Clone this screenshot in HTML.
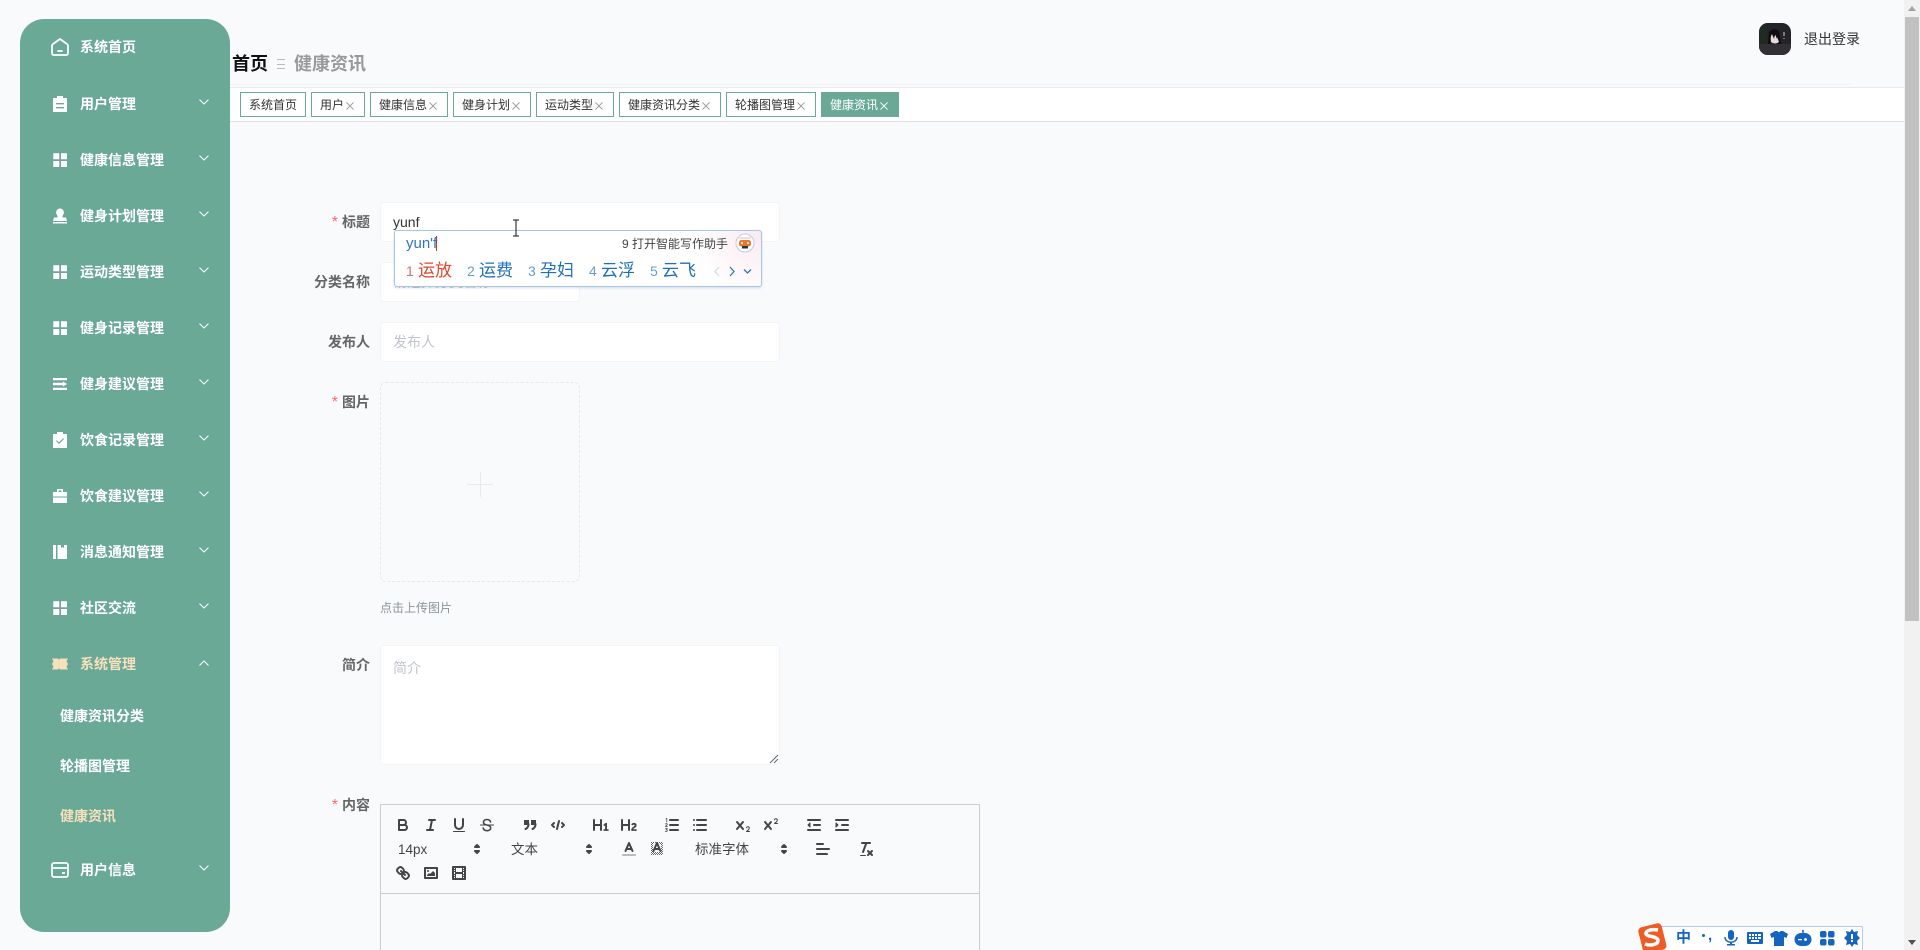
<!DOCTYPE html>
<html lang="zh-CN"><head><meta charset="utf-8"><title>健康资讯</title>
<style>
*{box-sizing:border-box}
html,body{margin:0;padding:0;width:1920px;height:950px;overflow:hidden;background:#f9fafc;font-family:"Liberation Sans","Noto Sans CJK SC",sans-serif}
#root{position:absolute;left:0;top:0;width:1920px;height:950px;overflow:hidden}
.a{position:absolute;white-space:nowrap}
#side{position:absolute;left:20px;top:19px;width:210px;height:913px;background:#6aa996;border-radius:24px}
.m{position:absolute;left:80px;line-height:20px;font-size:14px;font-weight:700;color:#fff;white-space:nowrap}
.s{left:60px}
.on{color:#f7e0bd}
.ic{position:absolute;left:50px;width:20px;height:20px;fill:#fff}
.ch{position:absolute;left:199px;width:10px;height:6px;fill:none;stroke:#fff;stroke-width:1}
.t{position:absolute;top:92px;height:25px;background:#fff;border:1px solid #6aa996;font-size:12px;line-height:24px;padding-left:8px;color:#333;white-space:nowrap}
.t svg{display:inline-block;width:8px;height:8px;margin-left:2px;vertical-align:-.5px;fill:none;stroke:#999;stroke-width:1.100}
.l{position:absolute;width:140px;left:230px;text-align:right;font-size:14px;font-weight:700;color:#666;line-height:20px}
.l b{color:#f56c6c;font-weight:400;margin-right:4px;font-size:16px;line-height:10px}
.in{position:absolute;left:380px;background:#fff;border:1px solid #f3f4f6;border-radius:4px;font-size:14px;color:#c0c4cc;padding-left:12px}
.q{position:absolute;width:18px;height:18px;fill:none;stroke:#444;stroke-width:2;stroke-linecap:round;stroke-linejoin:round}
.q .f{fill:#444;stroke:none}
.q .n{stroke-width:1}
.pk{position:absolute;top:841px;font-size:13.500px;line-height:18px;color:#444}
.ar{position:absolute;top:840px;width:18px;height:18px;fill:#444;stroke:#444;stroke-width:2;stroke-linejoin:round}
.n1{position:absolute;top:261px;font-size:14px;line-height:20px;color:#6b9bd0}
.c1{position:absolute;top:259px;font-size:17px;line-height:24px;color:#1f6fb8}
.sg{position:absolute;top:929px;width:18px;height:18px;fill:#1565c0}
</style></head><body>
<div id="root">

<!-- sidebar -->
<div id="side"></div>
<svg class="ic" style="top:37px;fill:none;stroke:#fff;stroke-width:1.800;stroke-linejoin:round" viewBox="0 0 20 20"><path d="M2 9q0-1.200 1-2L10 2l7 5q1 .8 1 2v7q0 2-2 2H4q-2 0-2-2z"/><path d="M8 14h4" stroke-linecap="round"/></svg>
<div class="m" style="top:37px">系统首页</div>

<svg class="ic" style="top:94px" viewBox="0 0 20 20"><path fill-rule="evenodd" d="M7 2h6v2h4v14H3V4h4zM6 9v1.400h8V9zM6 13v1.400h8V13z"/></svg>
<div class="m" style="top:94px">用户管理</div>
<svg class="ch" style="top:99px" viewBox="0 0 10 6"><path d="M.5.5 5 5 9.500.5"/></svg>

<svg class="ic" style="top:150px" viewBox="0 0 20 20"><path d="M3.300 3.300h6v6h-6zM11 3.300h6v6h-6zM3.300 11h6v6h-6zM11 11h6v6h-6z"/></svg>
<div class="m" style="top:150px">健康信息管理</div>
<svg class="ch" style="top:155px" viewBox="0 0 10 6"><path d="M.5.5 5 5 9.500.5"/></svg>

<svg class="ic" style="top:206px" viewBox="0 0 20 20"><path d="M10 2.500a4 4 0 0 1 3 6.500c-.6.800-.8 1.500-.4 2.500h3.400l1 3.500H3l1-3.500h3.400c.4-1 .2-1.700-.4-2.500A4 4 0 0 1 10 2.500zM3 16h14v1.500H3z"/></svg>
<div class="m" style="top:206px">健身计划管理</div>
<svg class="ch" style="top:211px" viewBox="0 0 10 6"><path d="M.5.5 5 5 9.500.5"/></svg>

<svg class="ic" style="top:262px" viewBox="0 0 20 20"><path d="M3.300 3.300h6v6h-6zM11 3.300h6v6h-6zM3.300 11h6v6h-6zM11 11h6v6h-6z"/></svg>
<div class="m" style="top:262px">运动类型管理</div>
<svg class="ch" style="top:267px" viewBox="0 0 10 6"><path d="M.5.5 5 5 9.500.5"/></svg>

<svg class="ic" style="top:318px" viewBox="0 0 20 20"><path d="M3.300 3.300h6v6h-6zM11 3.300h6v6h-6zM3.300 11h6v6h-6zM11 11h6v6h-6z"/></svg>
<div class="m" style="top:318px">健身记录管理</div>
<svg class="ch" style="top:323px" viewBox="0 0 10 6"><path d="M.5.5 5 5 9.500.5"/></svg>

<svg class="ic" style="top:374px" viewBox="0 0 20 20"><path d="M3 4h14v2.200H3zM3 8.800h10V7.500L17 10l-4 2.500v-1.300H3zM3 13.800h14V16H3z"/></svg>
<div class="m" style="top:374px">健身建议管理</div>
<svg class="ch" style="top:379px" viewBox="0 0 10 6"><path d="M.5.5 5 5 9.500.5"/></svg>

<svg class="ic" style="top:430px" viewBox="0 0 20 20"><path fill-rule="evenodd" d="M7 2h6v2h4v14H3V4h4zM6 11l3 3 5-5-.8-.8L9 12.400 6.800 10.200z"/></svg>
<div class="m" style="top:430px">饮食记录管理</div>
<svg class="ch" style="top:435px" viewBox="0 0 10 6"><path d="M.5.5 5 5 9.500.5"/></svg>

<svg class="ic" style="top:486px" viewBox="0 0 20 20"><path fill-rule="evenodd" d="M7 3h6v3h4v4.500H3V6h4zM8.500 4.500V6h3V4.500zM3 11.500h14V17H3z"/></svg>
<div class="m" style="top:486px">饮食建议管理</div>
<svg class="ch" style="top:491px" viewBox="0 0 10 6"><path d="M.5.5 5 5 9.500.5"/></svg>

<svg class="ic" style="top:542px" viewBox="0 0 20 20"><path d="M3 3h3v14H3zM7.500 3h3.500v3l1.500-1 1.500 1V3H17v14H7.500z"/></svg>
<div class="m" style="top:542px">消息通知管理</div>
<svg class="ch" style="top:547px" viewBox="0 0 10 6"><path d="M.5.5 5 5 9.500.5"/></svg>

<svg class="ic" style="top:598px" viewBox="0 0 20 20"><path d="M3.300 3.300h6v6h-6zM11 3.300h6v6h-6zM3.300 11h6v6h-6zM11 11h6v6h-6z"/></svg>
<div class="m" style="top:598px">社区交流</div>
<svg class="ch" style="top:603px" viewBox="0 0 10 6"><path d="M.5.5 5 5 9.500.5"/></svg>

<svg class="ic" style="top:654px;fill:#f7e0bd" viewBox="0 0 20 20"><path d="M2 4.500h6l1 1.500 1-1.500h8l-1.500 2.800L18 10l-1.500 2.700 1.500 2.800h-8l-1-1.500-1 1.500H2l1.500-2.800L2 10l1.500-2.700z"/></svg>
<div class="m on" style="top:654px">系统管理</div>
<svg class="ch" style="top:660px" viewBox="0 0 10 6"><path d="M.5 5.500 5 1 9.500 5.500"/></svg>

<div class="m s" style="top:706px">健康资讯分类</div>
<div class="m s" style="top:756px">轮播图管理</div>
<div class="m s on" style="top:806px">健康资讯</div>

<svg class="ic" style="top:860px;fill:none;stroke:#fff;stroke-width:1.800;stroke-linejoin:round" viewBox="0 0 20 20"><rect x="2" y="3" width="16" height="14" rx="2"/><path d="M2 8h16M12 13h3"/></svg>
<div class="m" style="top:860px">用户信息</div>
<svg class="ch" style="top:865px" viewBox="0 0 10 6"><path d="M.5.5 5 5 9.500.5"/></svg>

<!-- breadcrumb -->
<div class="a" style="left:232px;top:51px;font-size:18px;font-weight:700;line-height:26px;color:#111">首页</div>
<div class="a" style="left:277px;top:59px;width:8px;height:10px;border-top:1px solid #bbb;border-bottom:1px solid #bbb"></div>
<div class="a" style="left:277px;top:64px;width:8px;height:1px;background:#bbb"></div>
<div class="a" style="left:294px;top:51px;font-size:18px;font-weight:700;line-height:26px;color:#999">健康资讯</div>

<!-- top right -->
<svg class="a" style="left:1759px;top:23px;width:32px;height:32px;border-radius:9px" viewBox="0 0 32 32"><rect width="32" height="32" fill="#242428"/><rect y="0" width="8" height="32" fill="#1f2a22"/><rect y="21" width="32" height="11" fill="#332f36"/><path d="M9 21 10 9q5-5 10-1l2 13h-3l-1-5h-6l-1 5z" fill="#0d0d10"/><path d="M12 19q-1-5 1-8l2 3 2-3 3 8q-4 3-8 0z" fill="#eadadc"/><path d="M13 11l2 5 1-5 2 5 1-6-3-2z" fill="#0d0d10"/><path d="M25 9v4M25 15v1" stroke="#ccc" stroke-width="1"/></svg>
<div class="a" style="left:1804px;top:29px;font-size:14px;line-height:20px;color:#333">退出登录</div>

<!-- tab bar -->
<div class="a" style="left:230px;top:84px;width:1620px;height:1px;background:#f1f2f4"></div>
<div class="a" style="left:230px;top:87px;width:1674px;height:35px;background:#fff;border-top:1px solid #eaeaea;border-bottom:1px solid #dcdfe3"></div>
<div class="t" style="left:240px;width:66px">系统首页</div>
<div class="t" style="left:311px;width:54px">用户<svg viewBox="0 0 9 9"><path d="M.5.5l8 8M8.500.5l-8 8"/></svg></div>
<div class="t" style="left:370px;width:78px">健康信息<svg viewBox="0 0 9 9"><path d="M.5.5l8 8M8.500.5l-8 8"/></svg></div>
<div class="t" style="left:453px;width:78px">健身计划<svg viewBox="0 0 9 9"><path d="M.5.5l8 8M8.500.5l-8 8"/></svg></div>
<div class="t" style="left:536px;width:78px">运动类型<svg viewBox="0 0 9 9"><path d="M.5.5l8 8M8.500.5l-8 8"/></svg></div>
<div class="t" style="left:619px;width:102px">健康资讯分类<svg viewBox="0 0 9 9"><path d="M.5.5l8 8M8.500.5l-8 8"/></svg></div>
<div class="t" style="left:726px;width:90px">轮播图管理<svg viewBox="0 0 9 9"><path d="M.5.5l8 8M8.500.5l-8 8"/></svg></div>
<div class="t" style="left:821px;width:78px;background:#6aa996;color:#fff">健康资讯<svg viewBox="0 0 9 9" style="stroke:#fff"><path d="M.5.5l8 8M8.500.5l-8 8"/></svg></div>

<!-- form -->
<div class="l" style="top:212px"><b>*</b>标题</div>
<div class="in" style="top:202px;width:400px;height:40px;line-height:38px;color:#333">yunf</div>
<div class="l" style="top:272px">分类名称</div>
<div class="in" style="top:262px;width:200px;height:40px;line-height:38px">请选择分类名称</div>
<div class="l" style="top:332px">发布人</div>
<div class="in" style="top:322px;width:400px;height:40px;line-height:38px">发布人</div>
<div class="l" style="top:392px"><b>*</b>图片</div>
<div class="a" style="left:380px;top:382px;width:200px;height:200px;border:1px dashed #e6e8ec;border-radius:6px"></div>
<div class="a" style="left:467px;top:484px;width:26px;height:1px;background:#e8eaee"></div>
<div class="a" style="left:480px;top:472px;width:1px;height:25px;background:#e8eaee"></div>
<div class="a" style="left:380px;top:600px;font-size:12px;line-height:17px;color:#8c939d">点击上传图片</div>
<div class="l" style="top:655px">简介</div>
<div class="in" style="top:645px;width:400px;height:120px;line-height:20px;padding-top:12px">简介</div>
<svg class="a" style="left:769px;top:754px;width:10px;height:10px" viewBox="0 0 10 10" fill="none" stroke="#666" stroke-width="1"><path d="M1 9 9 1M5 9 9 5"/></svg>
<div class="l" style="top:795px"><b>*</b>内容</div>

<!-- editor -->
<div class="a" style="left:380px;top:804px;width:600px;height:146px;border:1px solid #ccc;border-bottom:0"></div>
<div class="a" style="left:381px;top:893px;width:598px;height:1px;background:#ccc"></div>

<svg class="q" style="left:394px;top:816px" viewBox="0 0 18 18"><path d="M5,4H9.500A2.500,2.500,0,0,1,12,6.500v0A2.500,2.500,0,0,1,9.500,9H5V4Z"/><path d="M5,9h5.500A2.500,2.500,0,0,1,13,11.500v0A2.500,2.500,0,0,1,10.500,14H5V9Z"/></svg>
<svg class="q" style="left:422px;top:816px" viewBox="0 0 18 18"><path d="M7 4h6M5 14h6M8 14 10 4"/></svg>
<svg class="q" style="left:450px;top:816px" viewBox="0 0 18 18"><path d="M5,3V9a4.012,4.012,0,0,0,4,4H9a4.012,4.012,0,0,0,4-4V3"/><rect class="f" x="3" y="15" width="12" height="1" rx=".5"/></svg>
<svg class="q" style="left:478px;top:816px" viewBox="0 0 18 18"><path class="n" d="M15.500 9h-13"/><path stroke-width="1.600" d="M12.500 6C12.200 4.500 10.800 3.500 9 3.500 7 3.500 5.500 4.600 5.500 6.200 5.500 8 7 8.700 9 9c2 .4 3.700 1.200 3.700 3 0 1.600-1.600 2.700-3.700 2.700-2 0-3.500-1-3.800-2.700"/></svg>
<svg class="q" style="left:521px;top:816px" viewBox="0 0 18 18"><rect class="f" x="3" y="4" width="5" height="5"/><rect class="f" x="10" y="4" width="5" height="5"/><path d="M7.500 8c0 4-3 5-3 5M14.500 8c0 4-3 5-3 5"/></svg>
<svg class="q" style="left:549px;top:816px" viewBox="0 0 18 18"><path d="M5 7 3 9l2 2M13 7l2 2-2 2M10 5 8 13"/></svg>
<svg class="q" style="left:592px;top:816px" viewBox="0 0 18 18"><path class="f" d="M10,4V14a1,1,0,0,1-2,0V10H3v4a1,1,0,0,1-2,0V4A1,1,0,0,1,3,4V8H8V4a1,1,0,0,1,2,0Zm6.068,9.209H14.990V7.599a.541.541,0,0,0-.605-.605h-.627a1.011,1.011,0,0,0-.748.297L11.645,8.566a.544.544,0,0,0-.022.858l.286.308a.539.539,0,0,0,.847.033l.099-.088a1.214,1.214,0,0,0,.242-.353h.022s-.011.309-.011.605V13.209H12.041a.541.541,0,0,0-.605.605v.439a.541.541,0,0,0,.605.605h4.027a.541.541,0,0,0,.605-.605v-.439A.541.541,0,0,0,16.068,13.209Z"/></svg>
<svg class="q" style="left:620px;top:816px" viewBox="0 0 18 18"><path class="f" d="M16.740,13.814v.439a.541.541,0,0,1-.605.605H11.855a.584.584,0,0,1-.649-.605V14.013c0-2.905,3.399-3.422,3.399-4.555a.777.777,0,0,0-.847-.781,1.177,1.177,0,0,0-.836.385c-.275.264-.561.374-.858.132l-.429-.341c-.308-.242-.385-.518-.154-.814a2.972,2.972,0,0,1,2.454-1.177,2.454,2.454,0,0,1,2.684,2.409c0,2.453-3.179,2.927-3.278,3.938h2.794A.541.541,0,0,1,16.740,13.814ZM9,3A1,1,0,0,0,8,4V8H3V4A1,1,0,0,0,1,4V14a1,1,0,0,0,2,0V10H8v4a1,1,0,0,0,2,0V4A1,1,0,0,0,9,3Z"/></svg>
<svg class="q" style="left:663px;top:816px" viewBox="0 0 18 18"><path d="M7 4h8M7 9h8M7 14h8"/><path style="stroke-width:.8" d="M3 2.500h.8V6M2.500 8c.5-.6 1.800-.4 1.800.4 0 .7-1.800 1.400-1.800 2.200h1.900M2.500 12.500h1.800l-1 1.200c1.200 0 1.400 1.800-.1 1.800-.4 0-.6-.1-.8-.3"/></svg>
<svg class="q" style="left:691px;top:816px" viewBox="0 0 18 18"><path d="M6 4h9M6 9h9M6 14h9M3 4h0M3 9h0M3 14h0"/></svg>
<svg class="q" style="left:734px;top:816px" viewBox="0 0 18 18"><path class="f" d="M15.500,15H13.861a3.858,3.858,0,0,0,1.914-2.975,1.805,1.805,0,0,0-1.600-1.751A1.921,1.921,0,0,0,12.021,11.700a.5.5,0,1,0,.957.291.914.914,0,0,1,1.053-.725.81.81,0,0,1,.744.762c0,1.076-1.170,1.870-1.940,2.431A1.456,1.456,0,0,0,12,15.500a.5.5,0,0,0,.5.5h3A.5.5,0,0,0,15.500,15Z"/><path class="f" d="M9.650,5.241a1,1,0,0,0-1.409.108L6,7.964,3.759,5.349A1,1,0,0,0,2.241,6.651L4.684,9.500,2.241,12.350a1,1,0,0,0,1.518,1.300L6,11.036,8.241,13.650a1,1,0,1,0,1.518-1.300L7.316,9.500,9.759,6.651A1,1,0,0,0,9.650,5.241Z"/></svg>
<svg class="q" style="left:762px;top:816px" viewBox="0 0 18 18"><path class="f" d="M15.500,7H13.861a4.015,4.015,0,0,0,1.914-2.975,1.805,1.805,0,0,0-1.600-1.751A1.922,1.922,0,0,0,12.021,3.700a.5.5,0,1,0,.957.291.917.917,0,0,1,1.053-.725.81.81,0,0,1,.744.762c0,1.077-1.164,1.925-1.934,2.486A1.423,1.423,0,0,0,12,7.500a.5.5,0,0,0,.5.5h3A.5.5,0,0,0,15.500,7Z"/><path class="f" d="M9.651,5.241a1,1,0,0,0-1.410.108L6,7.964,3.759,5.349a1,1,0,1,0-1.519,1.300L4.683,9.500,2.241,12.350a1,1,0,1,0,1.519,1.300L6,11.036,8.241,13.650a1,1,0,0,0,1.519-1.300L7.317,9.500,9.759,6.651A1,1,0,0,0,9.651,5.241Z"/></svg>
<svg class="q" style="left:805px;top:816px" viewBox="0 0 18 18"><path d="M3 14h12M3 4h12M9 9h6"/><path class="f" d="M5 7v4L3 9z" style="stroke:#444;stroke-width:1"/></svg>
<svg class="q" style="left:833px;top:816px" viewBox="0 0 18 18"><path d="M3 14h12M3 4h12M9 9h6"/><path class="f" d="M3 7v4l2-2z" style="stroke:#444;stroke-width:1"/></svg>

<div class="pk" style="left:398px">14px</div>
<svg class="ar" style="left:468px" viewBox="0 0 18 18"><path d="M7 11 9 13 11 11zM7 7 9 5 11 7z"/></svg>
<div class="pk" style="left:511px">文本</div>
<svg class="ar" style="left:580px" viewBox="0 0 18 18"><path d="M7 11 9 13 11 11zM7 7 9 5 11 7z"/></svg>
<svg class="q" style="left:620px;top:840px" viewBox="0 0 18 18"><path style="stroke:#bbb" d="M3 15h12"/><path d="M5.500 11 9 3l3.500 8M11.630 9H6.380"/></svg>
<svg class="q" style="left:648px;top:840px" viewBox="0 0 18 18"><g stroke="none" fill="#666"><rect x="3" y="2" width="1" height="1"/><rect x="5" y="2" width="1" height="1"/><rect x="7" y="2" width="1" height="1"/><rect x="9" y="2" width="1" height="1"/><rect x="11" y="2" width="1" height="1"/><rect x="13" y="2" width="1" height="1"/><rect x="4" y="3" width="1" height="1"/><rect x="12" y="3" width="1" height="1"/><rect x="14" y="3" width="1" height="1"/><rect x="3" y="4" width="1" height="1"/><rect x="13" y="4" width="1" height="1"/><rect x="4" y="5" width="1" height="1"/><rect x="14" y="5" width="1" height="1"/><rect x="3" y="6" width="1" height="1"/><rect x="13" y="6" width="1" height="1"/><rect x="4" y="7" width="1" height="1"/><rect x="14" y="7" width="1" height="1"/><rect x="3" y="8" width="1" height="1"/><rect x="13" y="8" width="1" height="1"/><rect x="4" y="9" width="1" height="1"/><rect x="14" y="9" width="1" height="1"/><rect x="3" y="10" width="1" height="1"/><rect x="13" y="10" width="1" height="1"/><rect x="4" y="11" width="1" height="1"/><rect x="14" y="11" width="1" height="1"/><rect x="3" y="12" width="1" height="1"/><rect x="5" y="12" width="1" height="1"/><rect x="7" y="12" width="1" height="1"/><rect x="9" y="12" width="1" height="1"/><rect x="11" y="12" width="1" height="1"/><rect x="13" y="12" width="1" height="1"/><rect x="4" y="13" width="1" height="1"/><rect x="6" y="13" width="1" height="1"/><rect x="8" y="13" width="1" height="1"/><rect x="10" y="13" width="1" height="1"/><rect x="12" y="13" width="1" height="1"/><rect x="14" y="13" width="1" height="1"/><rect x="3" y="14" width="1" height="1"/><rect x="5" y="14" width="1" height="1"/><rect x="7" y="14" width="1" height="1"/><rect x="9" y="14" width="1" height="1"/><rect x="11" y="14" width="1" height="1"/><rect x="13" y="14" width="1" height="1"/></g><path d="M5.500 11 9 3l3.500 8M11.630 9H6.380"/></svg>
<div class="pk" style="left:695px">标准字体</div>
<svg class="ar" style="left:775px" viewBox="0 0 18 18"><path d="M7 11 9 13 11 11zM7 7 9 5 11 7z"/></svg>
<svg class="q" style="left:814px;top:840px" viewBox="0 0 18 18"><path d="M3 9h12M3 14h10M3 4h6"/></svg>
<svg class="q" style="left:857px;top:840px" viewBox="0 0 18 18"><path d="M5 3h8M6 12 9.350 3M11 11l4 4M15 11l-4 4"/><rect class="f" x="3" y="15" width="6" height="1" rx=".5"/></svg>

<svg class="q" style="left:394px;top:864px" viewBox="0 0 18 18"><path d="M7 7l4 4M8.900 4.577a3.476 3.476 0 0 1 .36 4.679A3.476 3.476 0 0 1 4.577 8.900C3.185 7.500 2.035 6.400 4.217 4.217S7.500 3.185 8.900 4.577ZM13.423 9.100a3.476 3.476 0 0 0-4.679-.36 3.476 3.476 0 0 0 .36 4.679c1.392 1.392 2.500 2.542 4.679.36S14.815 10.500 13.423 9.100Z"/></svg>
<svg class="q" style="left:422px;top:864px" viewBox="0 0 18 18"><rect x="3" y="4" width="12" height="10"/><circle class="f" cx="6" cy="7" r="1"/><path class="f" d="M5 12V11L7 9 8 10 11 7 13 9V12Z"/></svg>
<svg class="q" style="left:450px;top:864px" viewBox="0 0 18 18"><rect x="3" y="3" width="12" height="12"/><path class="f" d="M5 3h1v12H5zM12 3h1v12h-1zM5 8h8v2H5zM3 5h3v1H3zM3 7h3v1H3zM3 10h3v1H3zM3 12h3v1H3zM12 5h3v1h-3zM12 7h3v1h-3zM12 10h3v1h-3zM12 12h3v1h-3z"/></svg>

<!-- IME popup -->
<div class="a" style="left:394px;top:230px;width:368px;height:57px;background:radial-gradient(circle at 100% 0,#fbe9f0 0,#fff 70px);border:1px solid #a9c5e0;border-radius:3px;box-shadow:0 1px 2px rgba(90,130,180,.25)"></div>
<div class="a" style="left:406px;top:234px;font-size:15px;line-height:20px;color:#2f75c0">yun'f</div>
<div class="a" style="left:436px;top:236px;width:1px;height:15px;background:#c0392b"></div>
<div class="a" style="left:622px;top:235px;font-size:12px;line-height:18px;color:#444">9 打开智能写作助手</div>
<svg class="a" style="left:735px;top:233px;width:20px;height:20px" viewBox="0 0 20 20"><circle cx="10" cy="10" r="9" fill="#fff" stroke="#b9cdea"/><path d="M3 2.500 7 4H13L17 2.500 16 6H4z" fill="#f7dcdc"/><rect x="4" y="7" width="12" height="6.500" rx="2.500" fill="#e8782a"/><rect x="7" y="13" width="6" height="2.500" fill="#333"/><circle cx="7" cy="10" r="1" fill="#fff"/><circle cx="13" cy="10" r="1" fill="#fff"/></svg>
<div class="n1" style="left:406px;color:#e0705c">1</div><div class="c1" style="left:418px;color:#e0452a">运放</div>
<div class="n1" style="left:467px">2</div><div class="c1" style="left:479px">运费</div>
<div class="n1" style="left:528px">3</div><div class="c1" style="left:540px">孕妇</div>
<div class="n1" style="left:589px">4</div><div class="c1" style="left:601px">云浮</div>
<div class="n1" style="left:650px">5</div><div class="c1" style="left:662px">云飞</div>
<svg class="a" style="left:712px;top:264px;width:42px;height:14px" viewBox="0 0 42 14" fill="none" stroke-width="1.300"><path d="M7 3 3 7.500 7 12" stroke="#d5dce6"/><path d="M18 3l4 4.500-4 4.500" stroke="#2f75c0"/><path d="M32 5.500l3.500 3.500L39 5.500" stroke="#2f75c0"/></svg>

<!-- text cursor -->
<svg class="a" style="left:511px;top:219px;width:10px;height:18px" viewBox="0 0 10 18" fill="none" stroke="#111" stroke-width="1"><path d="M2 1H8M5 1V17M2 17H8"/></svg>

<!-- scrollbar -->
<div class="a" style="left:1904px;top:0;width:16px;height:950px;background:#f1f1f1"></div>
<div class="a" style="left:1905px;top:17px;width:14px;height:604px;background:#c1c1c1"></div>
<div class="a" style="left:1908px;top:6px;width:0;height:0;border-left:4px solid transparent;border-right:4px solid transparent;border-bottom:5px solid #a3a3a3"></div>
<div class="a" style="left:1908px;top:940px;width:0;height:0;border-left:4px solid transparent;border-right:4px solid transparent;border-top:5px solid #505050"></div>

<!-- sogou bar -->
<div class="a" style="left:1660px;top:926px;width:203px;height:24px;background:#fff;border:1px solid #b8c9e6;border-bottom:0;border-radius:2px 2px 0 0"></div>
<svg class="a" style="left:1637px;top:922px;width:30px;height:28px;overflow:hidden" viewBox="0 0 30 28"><rect x="3" y="3" width="24" height="27" rx="4" fill="#ef5b25" transform="rotate(-14 15 15)"/><path d="M21 8C16 7 9 8 9 11.500S21 14 21 18.500 13 24 8 22" fill="none" stroke="#fff" stroke-width="3.500"/></svg>
<div class="a" style="left:1676px;top:928px;font-size:15px;font-weight:700;line-height:20px;color:#1565c0">中</div>
<div class="a" style="left:1702px;top:934px;width:3px;height:3px;border-radius:2px;background:#1565c0"></div>
<div class="a" style="left:1708px;top:926px;font-size:15px;font-weight:700;line-height:20px;color:#1565c0">,</div>
<svg class="sg" style="left:1722px" viewBox="0 0 18 18"><rect x="6" y="1" width="6" height="10" rx="3"/><path d="M3 8c0 7 12 7 12 0" fill="none" stroke="#1565c0" stroke-width="1.500"/><path d="M8 13h2v2h3v1.500H5V15h3z"/></svg>
<svg class="sg" style="left:1746px" viewBox="0 0 18 18"><path fill-rule="evenodd" d="M2 3h14q1 0 1 1v10q0 1-1 1H2q-1 0-1-1V4q0-1 1-1zM3 5v2h2V5zM6 5v2h2V5zM9 5v2h2V5zM12 5v2h3V5zM3 8v2h2V8zM6 8v2h2V8zM9 8v2h2V8zM12 8v2h3V8zM5 11v2h8v-2z"/></svg>
<svg class="sg" style="left:1770px" viewBox="0 0 18 18"><path d="M5 2h2.500c.4 1.500 2.600 1.500 3 0H13l5 3-1.500 4L14 8v9H4V8L1.500 9 0 5z"/></svg>
<svg class="sg" style="left:1794px" viewBox="0 0 18 18"><path fill-rule="evenodd" d="M9 1a1 1 0 0 1 .7 1.700V4h1.300a6.500 6.500 0 0 1 0 13H7a6.500 6.500 0 0 1 0-13h1.300V2.700A1 1 0 0 1 9 1zM4 10v1.200h4V10zM11.500 9a1.500 1.500 0 1 0 .01 0z"/></svg>
<svg class="sg" style="left:1818px" viewBox="0 0 18 18"><rect x="2" y="2" width="6.500" height="6.500" rx="2"/><rect x="10" y="2" width="6.500" height="6.500" rx="2"/><rect x="2" y="10" width="6.500" height="6.500" rx="2"/><rect x="10" y="10" width="6.500" height="6.500" rx="2"/></svg>
<svg class="sg" style="left:1843px" viewBox="0 0 18 18"><path fill-rule="evenodd" d="M9 0l2 3 4-1-1 4 3 3-3 3 1 4-4-1-2 3-2-3-4 1 1-4-3-3 3-3-1-4 4 1zM8 5v5h2V5zM8 11v2h2v-2z"/></svg>

</div>
</body></html>
